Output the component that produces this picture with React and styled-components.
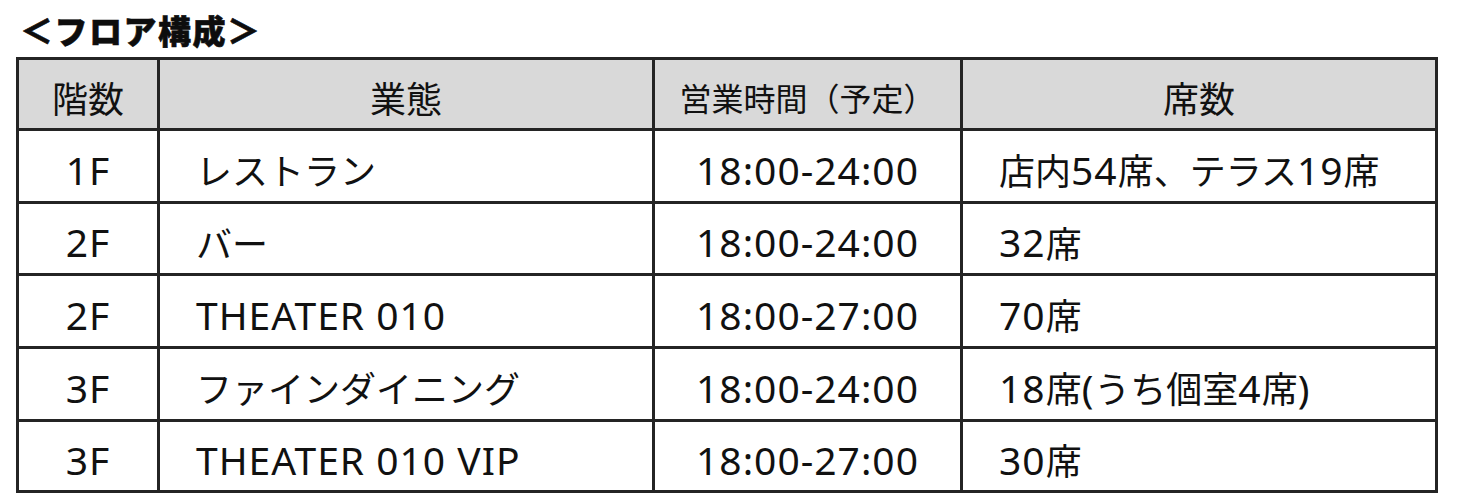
import React from "react";
import styled, { createGlobalStyle } from "styled-components";

const GlobalStyle = createGlobalStyle`
  html, body { margin: 0; padding: 0; background: #ffffff; }
  body {
    font-family: "Noto Sans CJK JP", "Noto Sans", sans-serif;
    color: #111111;
  }
`;

const Page = styled.div`
  padding: 14px 0 0 16px;
`;

const Title = styled.h2`
  margin: 0 0 10px 4px;
  font-family: "Noto Sans CJK JP", sans-serif;
  font-weight: 900;
  font-size: 33px;
  line-height: 33px;
  letter-spacing: 1.5px;
  color: #0d0d0d;
  -webkit-text-stroke: 0.6px #0d0d0d;
`;

const Grid = styled.div`
  display: inline-grid;
  grid-template-columns: 138px 492px 305px 472px;
  grid-template-rows: 68px 70px 69px 70px 70px 68px;
  gap: 3px;
  border: 3px solid #242424;
  background: #242424;
`;

const Cell = styled.div`
  display: flex;
  align-items: center;
  justify-content: ${(p) => (p.$align === "left" ? "flex-start" : "center")};
  padding: 6px 0 0 ${(p) => (p.$align === "left" ? "36px" : "0")};
  background: ${(p) => (p.$head ? "#d9d9d9" : "#ffffff")};
  font-family: "Noto Sans CJK JP", sans-serif;
  font-size: ${(p) => p.$size || 36}px;
  line-height: 1;
  white-space: nowrap;
  color: #111111;
`;

const Latin = styled.span`
  font-family: "Noto Sans", "Open Sans", sans-serif;
  font-size: 39px;
  letter-spacing: 1px;
`;

function MixedText({ text }) {
  const parts = text.split(/([\x20-\x7E]+)/).filter((s) => s.length);
  return parts.map((s, i) =>
    /^[\x20-\x7E]+$/.test(s) ? <Latin key={i}>{s}</Latin> : <span key={i}>{s}</span>
  );
}

const headers = [
  { label: "階数" },
  { label: "業態" },
  { label: "営業時間（予定）", size: 32 },
  { label: "席数" },
];

const rows = [
  ["1F", "レストラン", "18:00-24:00", "店内54席、テラス19席"],
  ["2F", "バー", "18:00-24:00", "32席"],
  ["2F", "THEATER 010", "18:00-27:00", "70席"],
  ["3F", "ファインダイニング", "18:00-24:00", "18席(うち個室4席)"],
  ["3F", "THEATER 010 VIP", "18:00-27:00", "30席"],
];

const aligns = ["center", "left", "center", "left"];

export default function App() {
  return (
    <>
      <GlobalStyle />
      <Page>
        <Title>＜フロア構成＞</Title>
        <Grid>
          {headers.map((h) => (
            <Cell key={h.label} $head $size={h.size}>
              {h.label}
            </Cell>
          ))}
          {rows.map((r, ri) =>
            r.map((c, ci) => (
              <Cell key={`${ri}-${ci}`} $align={aligns[ci]}>
                <MixedText text={c} />
              </Cell>
            ))
          )}
        </Grid>
      </Page>
    </>
  );
}
